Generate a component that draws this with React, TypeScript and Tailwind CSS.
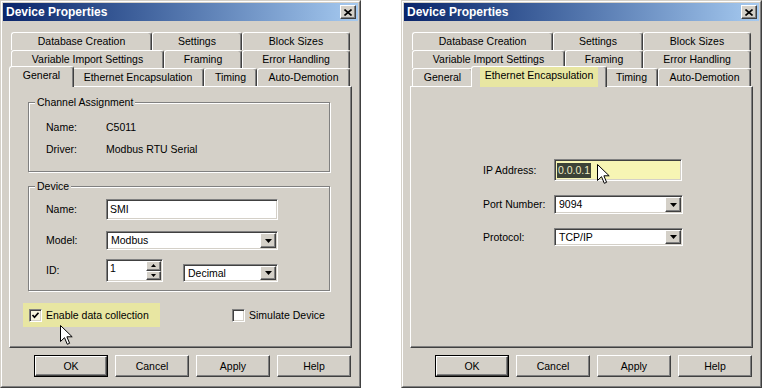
import React from "react";

const raised =
    "border border-t-white border-l-white border-r-[#404040] border-b-[#404040] shadow-[inset_-1px_-1px_0_#808080]";
const sunken =
    "border border-t-[#808080] border-l-[#808080] border-r-white border-b-white shadow-[inset_1px_1px_0_#404040,inset_-1px_-1px_0_#d4d0c8]";
const tabEdge =
    "border border-b-0 border-t-white border-l-white border-r-[#404040] shadow-[inset_-1px_0_0_#808080] rounded-t-[3px]";

interface TabDef {
    label: string;
    w: string;
}

const row1: TabDef[] = [
    { label: "Database Creation", w: "w-[141px]" },
    { label: "Settings", w: "w-[90px]" },
    { label: "Block Sizes", w: "w-[108px]" },
];
const row2: TabDef[] = [
    { label: "Variable Import Settings", w: "w-[153px]" },
    { label: "Framing", w: "w-[78px]" },
    { label: "Error Handling", w: "w-[108px]" },
];
const row3: TabDef[] = [
    { label: "General", w: "w-[61px]" },
    { label: "Ethernet Encapsulation", w: "w-[132px]" },
    { label: "Timing", w: "w-[53px]" },
    { label: "Auto-Demotion", w: "w-[93px]" },
];
// selected tabs are 4px wider and overlap their neighbours by 2px each side
const selectedWidth: Record<string, string> = {
    General: "w-[65px]",
    "Ethernet Encapsulation": "w-[136px]",
};

function TabRow({ tabs, selected, highlight }: { tabs: TabDef[]; selected?: string; highlight?: boolean }) {
    return (
        <div className="flex h-[18px] items-end px-[2px]">
            {tabs.map((t) =>
                t.label === selected ? (
                    <div
                        key={t.label}
                        className={`relative z-10 -mx-[2px] -mb-px flex h-[21px] shrink-0 justify-center bg-[#d4d0c8] ${tabEdge} ${selectedWidth[t.label]}`}
                    >
                        <span
                            className={`flex h-[20px] items-center pb-[3px] ${highlight ? "bg-[#e8e6a2] px-[5px]" : ""}`}
                        >
                            {t.label}
                        </span>
                    </div>
                ) : (
                    <div key={t.label} className={`flex h-full shrink-0 items-center justify-center ${tabEdge} ${t.w}`}>
                        {t.label}
                    </div>
                )
            )}
        </div>
    );
}

function Arrow({ up }: { up?: boolean }) {
    return (
        <svg width="7" height="4" viewBox="0 0 7 4">
            <path d={up ? "M0 4h7L3.5 0z" : "M0 0h7L3.5 4z"} fill="#000" />
        </svg>
    );
}

function Dropdown({ value, size }: { value: string; size: string }) {
    return (
        <div className={`flex bg-white p-px ${sunken} ${size}`}>
            <span className="flex flex-1 items-center pl-[3px]">{value}</span>
            <span className={`flex w-[16px] items-center justify-center bg-[#d4d0c8] ${raised}`}>
                <Arrow />
            </span>
        </div>
    );
}

function Checkbox({ checked, tint }: { checked?: boolean; tint?: boolean }) {
    return (
        <div className={`flex h-[13px] w-[13px] items-center justify-center ${tint ? "bg-[#f6f5dc]" : "bg-white"} ${sunken}`}>
            {checked && (
                <svg width="9" height="9" viewBox="0 0 9 9">
                    <path d="M1.5 4l2 2.2 4-4.4" fill="none" stroke="#000" strokeWidth="1.7" />
                </svg>
            )}
        </div>
    );
}

function Button({ label, isDefault }: { label: string; isDefault?: boolean }) {
    if (isDefault) {
        return (
            <div className="h-[22px] w-[74px] border border-black">
                <div className={`flex h-full w-full items-center justify-center ${raised}`}>{label}</div>
            </div>
        );
    }
    return <div className={`flex h-[22px] w-[74px] items-center justify-center ${raised}`}>{label}</div>;
}

function Cursor() {
    return (
        <svg width="13" height="21" viewBox="0 0 13 21">
            <path d="M0.5 0.5V16.5L4.5 12.7L7.3 19.3L9.6 18.3L6.9 11.8H12.2Z" fill="#fff" stroke="#000" strokeWidth="1" />
        </svg>
    );
}

function GroupBox({ label, className, children }: { label: string; className: string; children: React.ReactNode }) {
    return (
        <div
            className={`ml-[18px] w-[302px] border border-[#808080] shadow-[inset_1px_1px_0_#fff,1px_1px_0_#fff] ${className}`}
        >
            <div className="-mt-[7px] ml-[6px] w-fit bg-[#d4d0c8] px-[2px] leading-[13px]">{label}</div>
            {children}
        </div>
    );
}

function GeneralPage() {
    return (
        <div className="flex flex-col">
            <GroupBox label="Channel Assignment" className="mt-[15px] h-[70px]">
                <div className="mt-[12px] flex flex-col gap-[9px] pl-[17px] leading-[13px]">
                    <div className="flex">
                        <span className="w-[60px]">Name:</span>
                        <span>C5011</span>
                    </div>
                    <div className="flex">
                        <span className="w-[60px]">Driver:</span>
                        <span>Modbus RTU Serial</span>
                    </div>
                </div>
            </GroupBox>
            <GroupBox label="Device" className="mt-[14px] h-[105px]">
                <div className="mt-[6px] flex flex-col pl-[17px]">
                    <div className="flex items-center">
                        <span className="w-[60px]">Name:</span>
                        <div className={`flex h-[21px] w-[172px] items-center bg-white pl-[3px] ${sunken}`}>SMI</div>
                    </div>
                    <div className="mt-[11px] flex items-center">
                        <span className="w-[60px]">Model:</span>
                        <Dropdown value="Modbus" size="h-[19px] w-[172px]" />
                    </div>
                    <div className="mt-[9px] flex items-center">
                        <span className="w-[60px]">ID:</span>
                        <div className={`flex h-[23px] w-[57px] bg-white p-px ${sunken}`}>
                            <span className="flex-1 pl-[2px] leading-[14px]">1</span>
                            <div className="flex w-[15px] flex-col">
                                <span className={`flex flex-1 items-center justify-center bg-[#d4d0c8] ${raised}`}>
                                    <svg width="5" height="3" viewBox="0 0 5 3">
                                        <path d="M0 3h5L2.5 0z" fill="#000" />
                                    </svg>
                                </span>
                                <span className={`flex flex-1 items-center justify-center bg-[#d4d0c8] ${raised}`}>
                                    <svg width="5" height="3" viewBox="0 0 5 3">
                                        <path d="M0 0h5L2.5 3z" fill="#000" />
                                    </svg>
                                </span>
                            </div>
                        </div>
                        <div className="ml-[20px] self-end">
                            <Dropdown value="Decimal" size="h-[18px] w-[95px]" />
                        </div>
                    </div>
                </div>
            </GroupBox>
            <div className="mt-[12px] flex items-center">
                <div className="ml-[13px] flex h-[24px] w-[137px] items-center gap-[4px] bg-[#e8e6a2] pl-[6px]">
                    <Checkbox checked tint />
                    <span>Enable data collection</span>
                </div>
                <div className="ml-[72px] flex items-center gap-[4px]">
                    <Checkbox />
                    <span>Simulate Device</span>
                </div>
            </div>
        </div>
    );
}

function EthernetPage() {
    return (
        <div className="ml-[72px] flex flex-col">
            <div className="mt-[72px] flex items-center">
                <span className="w-[71px]">IP Address:</span>
                <div className={`flex h-[22px] w-[128px] items-center bg-[#f7f5b4] pl-[2px] ${sunken}`}>
                    <span className="bg-[#3c4237] px-px leading-[15px] text-[#eeecc4]">0.0.0.1</span>
                </div>
            </div>
            <div className="mt-[14px] flex items-center">
                <span className="w-[71px]">Port Number:</span>
                <Dropdown value="9094" size="h-[19px] w-[129px]" />
            </div>
            <div className="mt-[14px] flex items-center">
                <span className="w-[71px]">Protocol:</span>
                <Dropdown value="TCP/IP" size="h-[18px] w-[129px]" />
            </div>
        </div>
    );
}

function DeviceWindow({ page }: { page: "general" | "ethernet" }) {
    const selected = page === "general" ? "General" : "Ethernet Encapsulation";
    return (
        <div className="relative h-[388px] w-[361px] shrink-0 border border-t-[#d4d0c8] border-l-[#d4d0c8] border-r-[#404040] border-b-[#404040] bg-[#d4d0c8]">
            <div className="flex h-full flex-col border border-t-white border-l-white border-r-[#808080] border-b-[#808080] p-px">
                <div className="flex h-[18px] items-center justify-between bg-linear-to-r from-[#0a246a] to-[#a6caf0] pl-[3px] pr-[2px]">
                    <span className="text-[12px] font-bold text-white">Device Properties</span>
                    <div className={`flex h-[14px] w-[16px] items-center justify-center bg-[#d4d0c8] ${raised}`}>
                        <svg width="8" height="7" viewBox="0 0 8 7">
                            <path d="M0.5 0.5L7.5 6.5M7.5 0.5L0.5 6.5" stroke="#000" strokeWidth="1.6" />
                        </svg>
                    </div>
                </div>
                <div className="flex flex-1 flex-col px-[6px] pt-[11px]">
                    <TabRow tabs={row1} />
                    <TabRow tabs={row2} />
                    <TabRow tabs={row3} selected={selected} highlight={page === "ethernet"} />
                    <div className="h-[262px] border border-t-white border-l-white border-r-[#404040] border-b-[#404040] shadow-[inset_-1px_-1px_0_#808080]">
                        {page === "general" ? <GeneralPage /> : <EthernetPage />}
                    </div>
                    <div className="mt-[7px] flex justify-end gap-[7px] pr-px">
                        <Button label="OK" isDefault />
                        <Button label="Cancel" />
                        <Button label="Apply" />
                        <Button label="Help" />
                    </div>
                </div>
            </div>
            <div className={`absolute ${page === "general" ? "left-[59px] top-[324px]" : "left-[195px] top-[163px]"}`}>
                <Cursor />
            </div>
        </div>
    );
}

export default function App() {
    return (
        <div className="flex h-[388px] w-[762px] gap-[40px] overflow-hidden bg-white font-['Liberation_Sans',Arial,sans-serif] text-[10.5px] leading-[13px] text-black">
            <DeviceWindow page="general" />
            <DeviceWindow page="ethernet" />
        </div>
    );
}
